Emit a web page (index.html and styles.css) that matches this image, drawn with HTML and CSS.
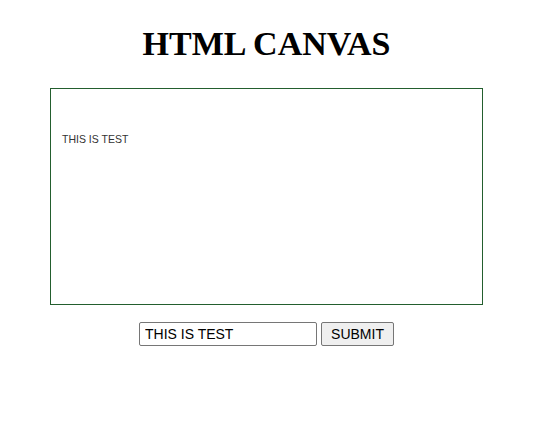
FILE: index.html
```html
<!DOCTYPE html>
<html lang="en">
<head>
    <meta charset="UTF-8">
    <meta name="viewport" content="width=device-width, initial-scale=1.0">
    <title>HTML Canvas</title>
    <link rel="stylesheet" href="styles.css">
</head>
<body>

<div id="page">
    <h1>HTML CANVAS</h1>

    <div id="board">
        <span id="board-text">THIS IS TEST</span>
    </div>

    <form id="text-form">
        <input type="text" id="text-input" value="THIS IS TEST">
        <button type="button" onclick="draw()">SUBMIT</button>
    </form>
</div>

<script>
    function draw() {
        const text = document.getElementById('text-input').value;
        document.getElementById('board-text').innerText = text;
    }
</script>

</body>
</html>
```

FILE: styles.css
```css
body {
    margin: 0;
    font-family: "Liberation Serif", "Times New Roman", serif;
    background: #fff;
}

#page {
    width: 533px;
    text-align: center;
}

h1 {
    margin: 0;
    padding-top: 25px;
    font-size: 34px;
    font-weight: bold;
    line-height: 38px;
}

#board {
    box-sizing: border-box;
    width: 433px;
    height: 217px;
    margin: 25px auto 0 50px;
    padding: 40px 0 0 11px;
    border: 1px solid #235e2e;
    text-align: left;
}

#board-text {
    font-family: "Liberation Sans", Arial, sans-serif;
    font-size: 10.5px;
    line-height: 12px;
    color: #333;
}

#text-form {
    display: flex;
    justify-content: center;
    gap: 4px;
    margin-top: 17px;
}

input {
    box-sizing: border-box;
    width: 178px;
    height: 24px;
    padding: 1px 5px;
    border: 1px solid #767676;
    border-radius: 2px;
    font-family: "Liberation Sans", Arial, sans-serif;
    font-size: 14px;
    color: #000;
}

button {
    box-sizing: border-box;
    width: 73px;
    height: 24px;
    padding: 1px 6px;
    background-color: #efefef;
    border: 1px solid #767676;
    border-radius: 2px;
    font-family: "Liberation Sans", Arial, sans-serif;
    font-size: 14px;
    color: #000;
    cursor: pointer;
}
button:hover {
    background-color: #e5e5e5;
}
```
